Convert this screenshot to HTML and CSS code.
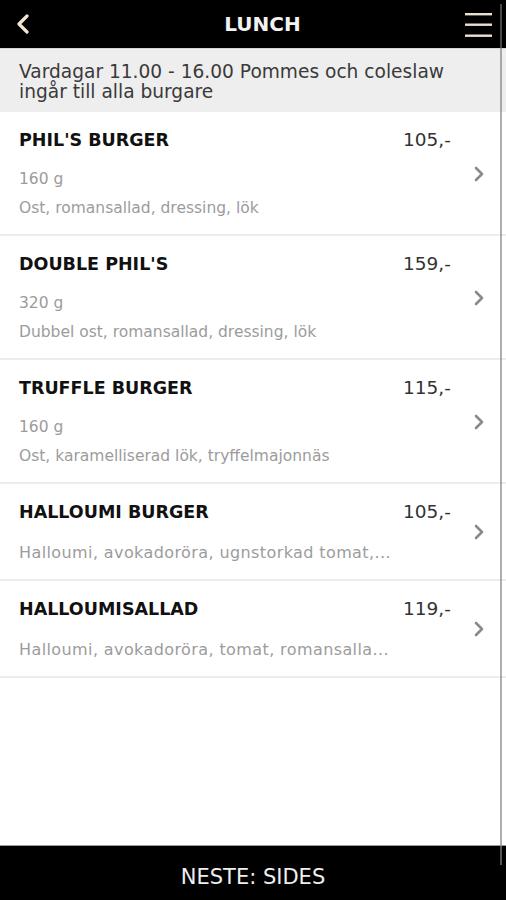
FILE: index.html
```html
<!DOCTYPE html>
<html lang="sv">
<head>
  <meta charset="UTF-8" />
  <meta name="viewport" content="width=device-width, initial-scale=1.0"/>
  <title>Lunch</title>
  <link rel="stylesheet" href="styles.css">
</head>
<body>

  <div class="screen">
    <div class="top-bar">
      <svg class="back" width="14" height="20" viewBox="0 0 14 20">
        <path d="M11 2 L3 10 L11 18" fill="none" stroke="#efe6d2" stroke-width="3.2" stroke-linecap="round" stroke-linejoin="round"/>
      </svg>
      <div class="top-title">LUNCH</div>
      <svg class="menu" width="27" height="26" viewBox="0 0 27 26">
        <rect x="0" y="1" width="27" height="2.4" fill="#e9e1cf"/>
        <rect x="0" y="11.5" width="27" height="2.4" fill="#e9e1cf"/>
        <rect x="0" y="22.5" width="27" height="2.4" fill="#e9e1cf"/>
      </svg>
    </div>

    <div class="info">Vardagar 11.00 - 16.00 Pommes och coleslaw ingår till alla burgare</div>

    <div class="menu-list" id="menuList"></div>

    <div class="bottom-bar">NESTE: SIDES</div>

    <div class="scroll-line"></div>
    <div class="scroll-thumb"></div>
  </div>

  <script>
    const dishes = [
      { name: "PHIL'S BURGER", price: '105,-', weight: '160 g', desc: 'Ost, romansallad, dressing, lök' },
      { name: "DOUBLE PHIL'S", price: '159,-', weight: '320 g', desc: 'Dubbel ost, romansallad, dressing, lök' },
      { name: 'TRUFFLE BURGER', price: '115,-', weight: '160 g', desc: 'Ost, karamelliserad lök, tryffelmajonnäs' },
      { name: 'HALLOUMI BURGER', price: '105,-', desc: 'Halloumi, avokadoröra, ugnstorkad tomat,...' },
      { name: 'HALLOUMISALLAD', price: '119,-', desc: 'Halloumi, avokadoröra, tomat, romansalla...' }
    ];

    const menuList = document.getElementById('menuList');

    dishes.forEach(dish => {
      menuList.innerHTML += `
        <div class="dish">
          <div class="dish-body">
            <div class="dish-head">
              <div class="dish-name">${dish.name}</div>
              <div class="dish-price">${dish.price}</div>
            </div>
            ${dish.weight ? `<div class="dish-weight">${dish.weight}</div>` : ''}
            <div class="dish-desc ${dish.weight ? '' : 'short'}">${dish.desc}</div>
          </div>
          <svg class="chev" width="12" height="18" viewBox="0 0 12 18">
            <path d="M3 3 L9 9 L3 15" fill="none" stroke="#8a8a8a" stroke-width="2.6" stroke-linecap="round" stroke-linejoin="round"/>
          </svg>
        </div>
      `;
    });
  </script>
</body>
</html>
```

FILE: styles.css
```css
* { margin: 0; padding: 0; box-sizing: border-box; }
body { background: #fff; font-family: 'DejaVu Sans', 'Liberation Sans', sans-serif; }

.screen {
  position: relative;
  width: 506px;
  height: 900px;
  display: flex;
  flex-direction: column;
  overflow: hidden;
}

.top-bar {
  height: 48px;
  background: #000;
  display: flex;
  align-items: center;
  justify-content: space-between;
  padding: 0 14px 0 16px;
}

.top-title {
  color: #f2f2f2;
  font-size: 20px;
  font-weight: bold;
  margin-left: 30px;
}

.menu { margin-top: 1px; }

.info {
  background: #eeeeee;
  color: #3a3a3a;
  font-size: 18.6px;
  line-height: 20px;
  padding: 13px 30px 10px 19px;
  border-top: 1px solid #d6d6d6;
}

.menu-list { flex: 1; }

.dish {
  display: flex;
  align-items: center;
  border-bottom: 2px solid #ececec;
  padding: 16px 21px 15px 19px;
}

.dish-body { flex: 1; min-width: 0; padding-right: 20px; }

.dish-head {
  display: flex;
  justify-content: space-between;
  line-height: 24px;
}

.dish-name {
  font-size: 17.5px;
  font-weight: bold;
  color: #111;
}

.dish-price {
  font-size: 18.5px;
  color: #333;
  width: 50px;
}

.dish-weight {
  margin-top: 16px;
  font-size: 15.5px;
  line-height: 22px;
  color: #9c9c9c;
}

.dish-desc {
  margin-top: 7px;
  font-size: 15.5px;
  line-height: 22px;
  color: #9c9c9c;
  white-space: nowrap;
}

.dish-desc.short {
  margin-top: 18px;
  font-size: 16px;
  letter-spacing: 0.4px;
}

.chev { flex-shrink: 0; }

.bottom-bar {
  height: 55px;
  background: #000;
  border-top: 1px solid #9a9a9a;
  color: #efefef;
  font-size: 21px;
  display: flex;
  align-items: center;
  justify-content: center;
  padding-top: 8px;
}

.scroll-line {
  position: absolute;
  left: 500px;
  top: 4px;
  width: 2px;
  height: 841px;
  background: rgba(120, 120, 120, 0.6);
}

.scroll-thumb {
  position: absolute;
  left: 500px;
  top: 846px;
  width: 2px;
  height: 19px;
  background: #555;
}
```
